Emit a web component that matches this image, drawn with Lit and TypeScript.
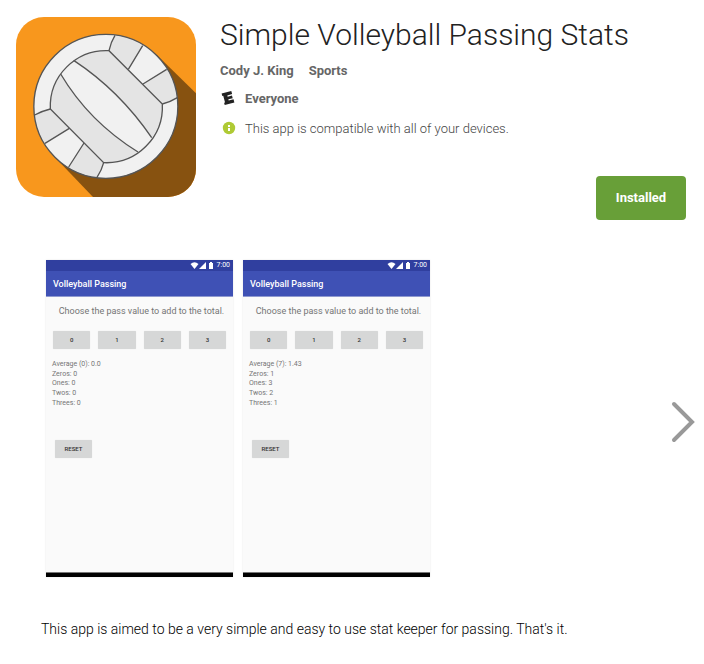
import { LitElement, html, css } from "lit";
import { customElement, property } from "lit/decorators.js";

@customElement("phone-shot")
class PhoneShot extends LitElement {
  @property({ attribute: false }) stats: string[] = [];

  static styles = css`
    :host {
      display: flex;
      flex-direction: column;
      width: 187px;
      height: 317px;
      background: #fafafa;
      box-shadow: 0 0 2px rgba(0, 0, 0, 0.1);
      color: #757575;
      font-family: Roboto, sans-serif;
    }
    .status {
      display: flex;
      align-items: center;
      justify-content: flex-end;
      height: 11px;
      padding-right: 3px;
      background: #303f9f;
      color: #fff;
      font-size: 7px;
      line-height: 11px;
    }
    .status svg { display: block; }
    .time { margin-left: 3px; }
    .bar {
      height: 25px;
      padding-left: 7px;
      background: #3f51b5;
      border-bottom: 1px solid #8f99cf;
      color: #fff;
      font-size: 9px;
      font-weight: 500;
      line-height: 26px;
    }
    .prompt {
      margin: 6px 0 0 4px;
      font-size: 9px;
      line-height: 16px;
      text-align: center;
      white-space: nowrap;
    }
    .keys {
      display: grid;
      grid-template-columns: repeat(4, 1fr);
      gap: 8px;
      margin: 12px 7px 0;
    }
    button {
      height: 18px;
      padding: 0;
      border: 0;
      border-radius: 1px;
      background: #d6d7d7;
      box-shadow: 0 0 1px rgba(0, 0, 0, 0.15);
      color: #333;
      font: 500 6px/18px Roboto, sans-serif;
    }
    .stats {
      display: grid;
      grid-auto-rows: 1fr;
      align-items: center;
      height: 48px;
      margin: 11px 0 0;
      padding: 0 0 0 6px;
      list-style: none;
      font-size: 7px;
      line-height: 9px;
    }
    .reset {
      width: 37px;
      margin: 32px 0 0 9px;
    }
    .nav {
      height: 4px;
      margin-top: auto;
      background: #000;
      border-top: 1px solid #777;
    }
  `;

  render() {
    return html`
      <div class="status">
        <svg width="9" height="7" viewBox="0 0 9 7"><path fill="#fff" d="M.5 2Q4.500-1.500 8.500 2L4.500 7Z" /></svg>
        <svg width="7" height="7" viewBox="0 0 7 7"><path fill="#fff" d="M7 0V7H0Z" /></svg>
        <svg width="8" height="7" viewBox="0 0 8 7"><path fill="#fff" d="M3 1H4V0H6V1H7V7H3Z" /></svg>
        <span class="time">7:00</span>
      </div>
      <div class="bar">Volleyball Passing</div>
      <div class="prompt">Choose the pass value to add to the total.</div>
      <div class="keys">${[0, 1, 2, 3].map((n) => html`<button type="button">${n}</button>`)}</div>
      <ul class="stats">${this.stats.map((s) => html`<li>${s}</li>`)}</ul>
      <button class="reset" type="button">RESET</button>
      <div class="nav"></div>
    `;
  }
}

@customElement("app-root")
class AppRoot extends LitElement {
  static styles = css`
    :host {
      display: block;
      background: #fff;
      color: #222;
      font-family: Roboto, sans-serif;
    }
    header {
      display: flex;
      gap: 24px;
      padding: 17px 18px 0 16px;
    }
    .logo { flex: none; display: block; width: 180px; height: 180px; }
    .info { flex: 1; display: flex; flex-direction: column; min-width: 0; }
    h1 {
      margin: 0;
      font-size: 30px;
      font-weight: 300;
      line-height: 36px;
    }
    .line {
      display: flex;
      align-items: center;
      height: 28px;
      color: #666;
      font-size: 13px;
      font-weight: 700;
    }
    .links { gap: 15px; margin-top: 3px; }
    .line svg { flex: none; width: 16px; margin-right: 9px; }
    a { color: inherit; text-decoration: none; }
    .compat { height: 32px; font-weight: 300; color: #444; }
    .install {
      align-self: flex-end;
      width: 90px;
      height: 44px;
      margin-top: 32px;
      border: 0;
      border-radius: 4px;
      background: #689f38;
      color: #fff;
      font: 700 13px/44px Roboto, sans-serif;
      padding: 0;
    }
    .gallery {
      display: flex;
      gap: 10px;
      padding: 40px 8px 0 46px;
    }
    .next {
      align-self: center;
      width: 26px;
      height: 44px;
      margin-left: auto;
      margin-top: 6px;
      padding: 0;
      border: 0;
      background: none;
    }
    .next svg { display: block; }
    .about {
      margin: 42px 40px 24px 41px;
      font-size: 14px;
      font-weight: 300;
      color: #000;
      line-height: 20px;
    }
  `;

  render() {
    return html`
      <header>
        <svg class="logo" viewBox="24 27 540 540" role="img" aria-label="Volleyball">
          <defs><clipPath id="tile"><rect x="24" y="27" width="540" height="540" rx="84" /></clipPath></defs>
          <g clip-path="url(#tile)">
            <rect x="24" y="27" width="540" height="540" fill="#f8971d" />
            <path fill="#875210" d="M446 140L564 256V567H255L140 447Z" />
          </g>
          <circle cx="293.500" cy="295" r="216" fill="#f1f1f1" />
          <g fill="#e4e4e4">
            <path d="M197 157Q245 126 303 128L463 288Q464 345 431 389Q335 248 197 157Z" />
            <path d="M158 198Q126 245 127 303L287 464Q345 464 390 432Q243 341 158 198Z" />
            <path d="M303 128Q308 103 321 82Q365 88 404 113L361 184Z" />
            <path d="M405 228L476 184Q501 222 508 269Q487 282 463 288Z" />
            <path d="M127 303Q102 309 80 321Q88 368 111 406L184 361Z" />
            <path d="M228 405L182 477Q224 502 267 508Q281 487 287 464Z" />
          </g>
          <g fill="none" stroke="#555" stroke-width="4">
            <circle cx="293.500" cy="295" r="216" />
            <path d="M303 128A168 168 0 0 0 127 303L287 464A168 168 0 0 0 463 288Z" />
            <path d="M197 157Q335 248 431 389M158 198Q243 341 390 432" />
            <path d="M303 128Q308 103 321 82M463 288Q487 282 508 269M127 303Q102 309 80 321M287 464Q281 487 267 508" />
            <path d="M404 113L361 184M405 228L476 184M111 406L184 361M228 405L182 477" />
          </g>
        </svg>
        <div class="info">
          <h1>Simple Volleyball Passing Stats</h1>
          <div class="line links"><a href="#developer">Cody J. King</a><a href="#sports">Sports</a></div>
          <div class="line">
            <svg height="16" viewBox="0 0 16 16" aria-hidden="true"><path transform="rotate(-15 8 8)" fill="#222" d="M3 2H13V5.300H8V6.600H12.500V9.400H8V10.700H13V14H3V11.500H4V4.500H3Z" /></svg>
            <span>Everyone</span>
          </div>
          <div class="line compat">
            <svg height="16" viewBox="0 0 16 16" aria-hidden="true"><circle cx="9" cy="8" r="6.200" fill="#afca34" /><path fill="#fff" d="M8 5H10V7H8ZM8 8H10V11H8Z" /></svg>
            <span>This app is compatible with all of your devices.</span>
          </div>
          <button class="install" type="button">Installed</button>
        </div>
      </header>
      <section class="gallery">
        <phone-shot .stats=${["Average (0): 0.0", "Zeros: 0", "Ones: 0", "Twos: 0", "Threes: 0"]}></phone-shot>
        <phone-shot .stats=${["Average (7): 1.43", "Zeros: 1", "Ones: 3", "Twos: 2", "Threes: 1"]}></phone-shot>
        <button class="next" type="button" aria-label="Next">
          <svg width="26" height="44" viewBox="0 0 26 44"><path d="M4 4L22 22L4 40" fill="none" stroke="#999" stroke-width="4" stroke-linecap="round" /></svg>
        </button>
      </section>
      <p class="about">This app is aimed to be a very simple and easy to use stat keeper for passing. That's it.</p>
    `;
  }
}
